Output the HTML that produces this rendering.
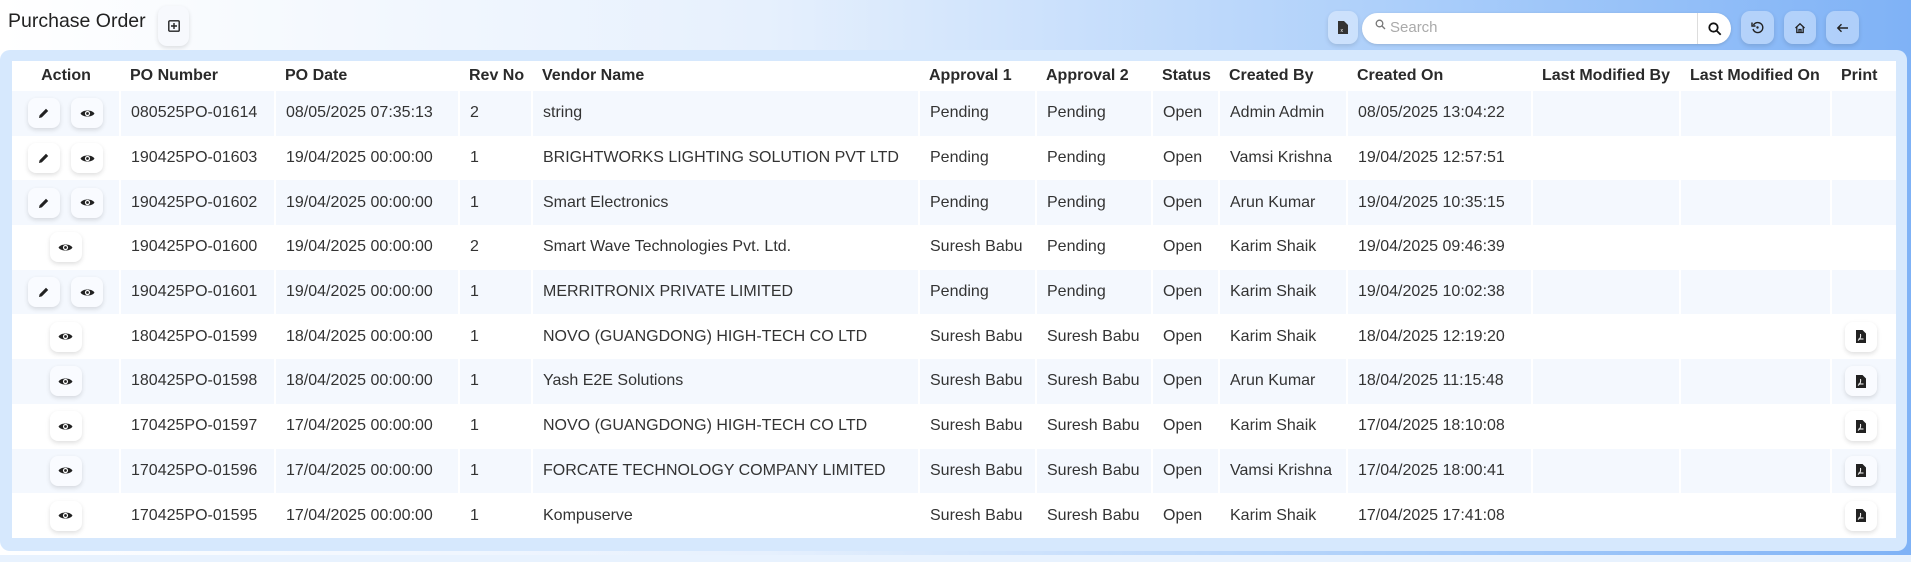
<!DOCTYPE html>
<html><head><meta charset="utf-8">
<style>
*{box-sizing:border-box;margin:0;padding:0}
body{width:1911px;height:562px;overflow:hidden;font-family:"Liberation Sans",sans-serif;background:linear-gradient(90deg,#ffffff 0%,#e6f0fd 40%,#a9cdfa 75%,#7fb2f6 100%);position:relative;color:#333}
.title{position:absolute;left:8px;top:10px;font-size:19.5px;color:#222}
.btn{position:absolute;background:rgba(255,255,255,0.35);border-radius:9px;box-shadow:0 2px 5px rgba(0,0,0,0.12);display:flex;align-items:center;justify-content:center}
.addb{left:158px;top:6px;width:31px;height:40px;background:#f7f9fd}
.search{position:absolute;left:1362px;top:13px;width:369px;height:31px;background:#fff;border-radius:16px;box-shadow:0 1px 3px rgba(0,0,0,0.15)}
.search span{position:absolute;left:28px;top:6px;font-size:15px;color:#aaa}
.search .sb{position:absolute;right:0;top:0;width:34px;height:31px;border-left:1px solid #ddd;display:flex;align-items:center;justify-content:center}
.panel{position:absolute;left:0;top:50px;width:1907px;height:501px;background:#d6e8fd;border-radius:10px}
.strip{position:absolute;left:0;top:555px;width:1911px;height:7px;background:#e8f2fe}
table{position:absolute;left:12px;top:61px;width:1884px;border-collapse:collapse;table-layout:fixed;background:#fff;font-size:16px}
th{height:30px;text-align:left;font-weight:bold;color:#2a2a2a;padding-left:10px;background:#fff}
td{height:44.7px;padding-left:10px;border-left:2px solid #fff;white-space:nowrap;overflow:hidden}
td:first-child{border-left:none;padding-left:0}
tr.o td{background:#f4f8fe}
.act{display:flex;justify-content:center;gap:11px}
.ib{width:32px;height:30px;background:#fff;border-radius:8px;box-shadow:0 2px 5px rgba(0,0,0,0.13);display:flex;align-items:center;justify-content:center}
tr.o .ib{background:#f9fbff}
</style></head><body>
<div class="title">Purchase Order</div>
<div class="btn addb"><svg width="12" height="12" viewBox="0 0 12 12"><rect x="0.8" y="0.8" width="10.4" height="10.4" fill="none" stroke="#222" stroke-width="1.4" rx="1"/><path d="M6 3v6M3 6h6" stroke="#222" stroke-width="1.4"/></svg></div>
<div class="btn" style="left:1328px;top:11px;width:30px;height:33px"><svg width="10" height="13" viewBox="0 0 10 13"><path d="M0 0h6l4 4v9H0z" fill="#333"/><text x="2.5" y="11" font-size="5" fill="#fff" font-family="Liberation Sans">x</text></svg></div>
<div class="search"><svg style="position:absolute;left:13px;top:6px" width="11" height="11" viewBox="0 0 11 11"><circle cx="4.5" cy="4.5" r="3.3" fill="none" stroke="#777" stroke-width="1.3"/><path d="M7 7l3 3" stroke="#777" stroke-width="1.3"/></svg><span>Search</span><div class="sb"><svg width="14" height="14" viewBox="0 0 14 14"><circle cx="5.5" cy="5.5" r="4.2" fill="none" stroke="#111" stroke-width="1.8"/><path d="M8.7 8.7l4 4" stroke="#111" stroke-width="1.8"/></svg></div></div>
<div class="btn" style="left:1741px;top:11px;width:33px;height:33px"><svg width="13" height="13" viewBox="0 0 13 13"><path d="M2.5 4A5 5 0 1 1 2 8" fill="none" stroke="#222" stroke-width="1.4"/><path d="M1 1.5v3.5h3.5" fill="none" stroke="#222" stroke-width="1.4"/><circle cx="6.5" cy="6.5" r="1.2" fill="#222"/></svg></div>
<div class="btn" style="left:1784px;top:11px;width:32px;height:33px"><svg width="12" height="12" viewBox="0 0 12 12"><path d="M1.5 6L6 1.8 10.5 6M2.8 5v5.5h6.4V5M5 10.5V7.5h2v3" fill="none" stroke="#222" stroke-width="1.3"/></svg></div>
<div class="btn" style="left:1826px;top:11px;width:33px;height:33px"><svg width="13" height="10" viewBox="0 0 13 10"><path d="M12 5H2M5.5 1.3L1.8 5l3.7 3.7" fill="none" stroke="#222" stroke-width="1.4"/></svg></div>
<div class="panel"></div>
<div class="strip"></div>
<table>
<colgroup><col style="width:108px"><col style="width:155px"><col style="width:184px"><col style="width:73px"><col style="width:387px"><col style="width:117px"><col style="width:116px"><col style="width:67px"><col style="width:128px"><col style="width:185px"><col style="width:148px"><col style="width:151px"><col style="width:65px"></colgroup>
<tr><th style="text-align:center;padding-left:0">Action</th><th>PO Number</th><th>PO Date</th><th>Rev No</th><th>Vendor Name</th><th>Approval 1</th><th>Approval 2</th><th>Status</th><th>Created By</th><th>Created On</th><th>Last Modified By</th><th>Last Modified On</th><th>Print</th></tr>
</table>
<script>
var E='<div class="ib"><svg width="12" height="12" viewBox="0 0 12 12"><path d="M1 11l.6-2.8L8 1.8l2.2 2.2-6.4 6.4z" fill="#222"/></svg></div>';
var V='<div class="ib"><svg width="15" height="11" viewBox="0 0 14 10"><path d="M0.5 5C2.5 1.2 11.5 1.2 13.5 5 11.5 8.8 2.5 8.8 0.5 5z" fill="#222"/><circle cx="7" cy="5" r="2.4" fill="#fff"/><circle cx="7" cy="5" r="1.3" fill="#222"/></svg></div>';
var P='<div class="ib" style="margin-left:3px"><svg width="10" height="13" viewBox="0 0 10 13"><path d="M0 0h6.5l3.5 3.5V13H0z" fill="#222"/><path d="M2 10.5c2-1.5 3-4 2.5-6.5M2.5 9h5" stroke="#fff" stroke-width="1" fill="none"/></svg></div>';
var d=[[1,'080525PO-01614','08/05/2025 07:35:13','2','string','Pending','Pending','Admin Admin','08/05/2025 13:04:22',0],
[1,'190425PO-01603','19/04/2025 00:00:00','1','BRIGHTWORKS LIGHTING SOLUTION PVT LTD','Pending','Pending','Vamsi Krishna','19/04/2025 12:57:51',0],
[1,'190425PO-01602','19/04/2025 00:00:00','1','Smart Electronics','Pending','Pending','Arun Kumar','19/04/2025 10:35:15',0],
[0,'190425PO-01600','19/04/2025 00:00:00','2','Smart Wave Technologies Pvt. Ltd.','Suresh Babu','Pending','Karim Shaik','19/04/2025 09:46:39',0],
[1,'190425PO-01601','19/04/2025 00:00:00','1','MERRITRONIX PRIVATE LIMITED','Pending','Pending','Karim Shaik','19/04/2025 10:02:38',0],
[0,'180425PO-01599','18/04/2025 00:00:00','1','NOVO (GUANGDONG) HIGH-TECH CO LTD','Suresh Babu','Suresh Babu','Karim Shaik','18/04/2025 12:19:20',1],
[0,'180425PO-01598','18/04/2025 00:00:00','1','Yash E2E Solutions','Suresh Babu','Suresh Babu','Arun Kumar','18/04/2025 11:15:48',1],
[0,'170425PO-01597','17/04/2025 00:00:00','1','NOVO (GUANGDONG) HIGH-TECH CO LTD','Suresh Babu','Suresh Babu','Karim Shaik','17/04/2025 18:10:08',1],
[0,'170425PO-01596','17/04/2025 00:00:00','1','FORCATE TECHNOLOGY COMPANY LIMITED','Suresh Babu','Suresh Babu','Vamsi Krishna','17/04/2025 18:00:41',1],
[0,'170425PO-01595','17/04/2025 00:00:00','1','Kompuserve','Suresh Babu','Suresh Babu','Karim Shaik','17/04/2025 17:41:08',1]];
var t=document.querySelector('table'),h='';
d.forEach(function(r,i){h+='<tr class="'+(i%2==0?'o':'')+'"><td><div class="act">'+(r[0]?E:'')+V+'</div></td><td>'+r[1]+'</td><td>'+r[2]+'</td><td>'+r[3]+'</td><td>'+r[4]+'</td><td>'+r[5]+'</td><td>'+r[6]+'</td><td>Open</td><td>'+r[7]+'</td><td>'+r[8]+'</td><td></td><td></td><td>'+(r[9]?P:'')+'</td></tr>';});
t.insertAdjacentHTML('beforeend',h);
</script>
</body></html>
